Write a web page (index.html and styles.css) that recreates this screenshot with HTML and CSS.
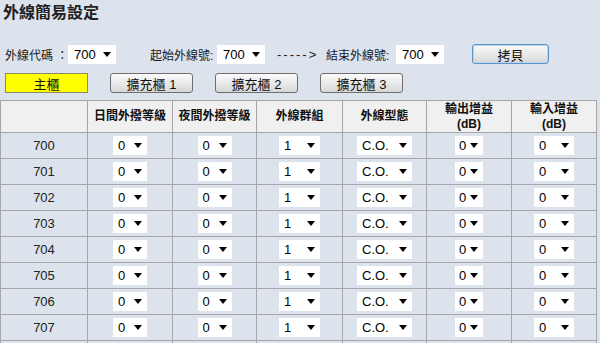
FILE: index.html
```html
<!DOCTYPE html>
<html lang="zh-Hant">
<head>
    <meta charset="UTF-8">
    <title>外線簡易設定</title>
    <link rel="stylesheet" href="styles.css">
</head>
<body>
    <h1 class="title">外線簡易設定</h1>

    <div class="controls">
        <span class="label label-code">外線代碼 ：</span>
        <span class="sel sel-top">700</span>
        <span class="label label-start">起始外線號:</span>
        <span class="sel sel-top">700</span>
        <span class="arrow-text">-----&gt;</span>
        <span class="label label-end">結束外線號:</span>
        <span class="sel sel-top">700</span>
        <button class="btn btn-copy">拷貝</button>
    </div>

    <div class="tabs">
        <button class="btn tab tab-active">主櫃</button>
        <button class="btn tab">擴充櫃 1</button>
        <button class="btn tab">擴充櫃 2</button>
        <button class="btn tab">擴充櫃 3</button>
    </div>

    <table class="trunks">
        <colgroup>
            <col style="width:87px">
            <col style="width:85px">
            <col style="width:84px">
            <col style="width:86px">
            <col style="width:84px">
            <col style="width:85px">
            <col style="width:85px">
        </colgroup>
        <thead>
            <tr>
                <th></th>
                <th>日間外撥等級</th>
                <th>夜間外撥等級</th>
                <th>外線群組</th>
                <th>外線型態</th>
                <th>輸出增益<br>(dB)</th>
                <th>輸入增益<br>(dB)</th>
            </tr>
        </thead>
        <tbody id="rows"></tbody>
    </table>

    <script>
        // build trunk rows 700 - 708
        var tbody = document.getElementById('rows');
        for (var i = 700; i <= 708; i++) {
            var tr = document.createElement('tr');
            tr.innerHTML =
                '<td class="num">' + i + '</td>' +
                '<td><span class="sel sel-n">0</span></td>' +
                '<td><span class="sel sel-n">0</span></td>' +
                '<td><span class="sel sel-g">1</span></td>' +
                '<td><span class="sel sel-t">C.O.</span></td>' +
                '<td><span class="sel sel-db">0</span></td>' +
                '<td><span class="sel sel-in">0</span></td>';
            tbody.appendChild(tr);
        }
    </script>
</body>
</html>
```

FILE: styles.css
```css
body {
    margin: 0;
    background-color: #dce3ed;
    font-family: "Liberation Sans", "Noto Sans CJK TC", sans-serif;
    font-size: 13px;
    color: #1a1a1a;
    overflow: hidden;
}
.title {
    margin: 0;
    padding: 4px 3px;
    font-size: 16px;
    line-height: 18px;
    font-weight: bold;
    color: #222;
}
.controls {
    display: flex;
    align-items: center;
    height: 20px;
    margin-top: 18px;
    padding-left: 5px;
}
.label {
    white-space: nowrap;
    font-size: 12px;
}
.label-code {
    width: 63px;
}
.label-start {
    margin-left: 34px;
    width: 67px;
}
.label-end {
    width: 70px;
}
.arrow-text {
    width: 40px;
    margin: 0 9px 0 12px;
    letter-spacing: 2px;
    white-space: nowrap;
}
.sel {
    display: inline-flex;
    align-items: center;
    justify-content: space-between;
    box-sizing: border-box;
    height: 19px;
    padding: 0 5px 0 5px;
    background: #fff;
    color: #000;
    font-size: 13px;
    vertical-align: middle;
}
.sel::after {
    content: "";
    border-left: 4px solid transparent;
    border-right: 4px solid transparent;
    border-top: 5px solid #000;
}
.sel-top {
    width: 48px;
    padding-left: 6px;
}
.sel-n {
    width: 34px;
}
.sel-g {
    width: 41px;
}
.sel-t {
    width: 55px;
}
.sel-db {
    width: 28px;
    padding-left: 4px;
}
.sel-in {
    width: 40px;
}
.btn {
    box-sizing: border-box;
    height: 20px;
    padding: 0;
    font-family: "Liberation Sans", "Noto Sans CJK TC", sans-serif;
    font-size: 13px;
    color: #111;
    background: linear-gradient(#fbfbfb, #e6e6e6 60%, #d6d6d6);
    border: 1px solid #6f6f6f;
    border-radius: 3px;
}
.btn-copy {
    width: 77px;
    margin-left: 28px;
    border-color: #5a94c8;
    box-shadow: inset 0 0 0 1px #b9d4ec;
}
.tabs {
    display: flex;
    gap: 22px;
    margin-top: 9px;
    padding-left: 5px;
}
.tab {
    width: 83px;
}
.tab-active {
    background: #ffff00;
    border-color: #8a8a6a;
    border-radius: 0;
}
.trunks {
    margin-top: 7px;
    border-collapse: collapse;
    table-layout: fixed;
    width: 596px;
}
.trunks th,
.trunks td {
    border: 1px solid #a6a6a6;
    padding: 0;
    text-align: center;
}
.trunks th {
    height: 31px;
    background: #f0f0f0;
    font-size: 12px;
    line-height: 15px;
    font-weight: bold;
    color: #111;
}
.trunks td {
    height: 25px;
    background: #dce3ed;
}
.trunks td.num {
    color: #222;
}
```
